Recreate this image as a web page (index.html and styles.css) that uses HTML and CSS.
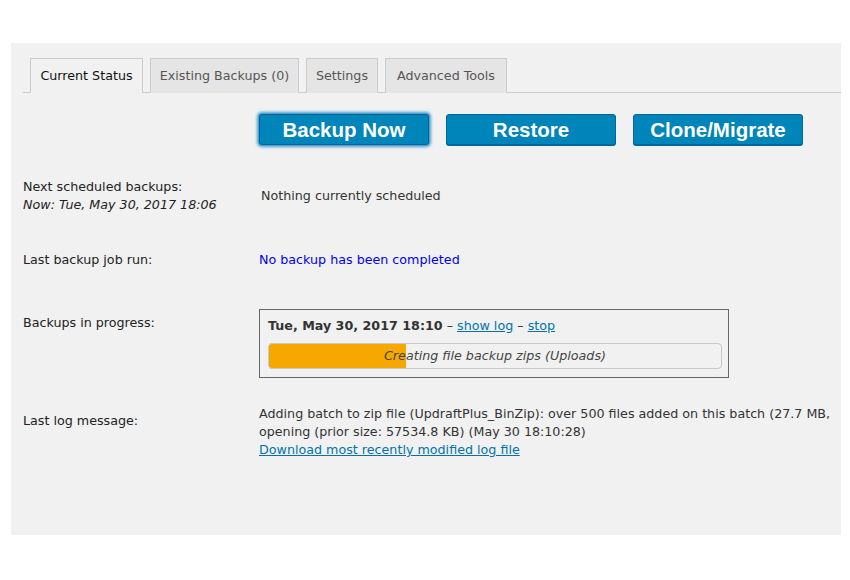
FILE: index.html
```html
<!DOCTYPE html>
<html>
<head>
<meta charset="utf-8">
<link rel="stylesheet" href="styles.css">
</head>
<body>
<div class="panel">
  <nav class="tabs">
    <span class="tab active">Current Status</span>
    <span class="tab">Existing Backups (0)</span>
    <span class="tab">Settings</span>
    <span class="tab">Advanced Tools</span>
  </nav>
  <div class="buttons">
    <button class="btn focused">Backup Now</button>
    <button class="btn">Restore</button>
    <button class="btn">Clone/Migrate</button>
  </div>
  <div class="row row-sched">
    <div class="label">Next scheduled backups:<br><em>Now: Tue, May 30, 2017 18:06</em></div>
    <div class="value muted">Nothing currently scheduled</div>
  </div>
  <div class="row row-last">
    <div class="label">Last backup job run:</div>
    <div class="value"><span class="blue">No backup has been completed</span></div>
  </div>
  <div class="row row-progress">
    <div class="label">Backups in progress:</div>
    <div class="value">
      <div class="job">
        <div class="job-title"><strong>Tue, May 30, 2017 18:10</strong> – <a href="#">show log</a> – <a href="#">stop</a></div>
        <div class="bar">
          <div class="fill" style="width:30.2%"></div>
          <div class="bar-text">Creating file backup zips (Uploads)</div>
        </div>
      </div>
    </div>
  </div>
  <div class="row row-log">
    <div class="label">Last log message:</div>
    <div class="value log">Adding batch to zip file (UpdraftPlus_BinZip): over 500 files added on this batch (27.7 MB,<br>opening (prior size: 57534.8 KB) (May 30 18:10:28)<br><a href="#">Download most recently modified log file</a></div>
  </div>
</div>
</body>
</html>
```

FILE: styles.css
```css
html, body {
  margin: 0;
  padding: 0;
  background: #ffffff;
}
body {
  font-family: "DejaVu Sans", Verdana, sans-serif;
  font-size: 12.7px;
  line-height: 18px;
  color: #222;
}
.panel {
  margin: 43px 0 0 11px;
  width: 830px;
  height: 492px;
  background: #f1f1f1;
  box-sizing: border-box;
  padding: 15px 0 0 12px;
  overflow: hidden;
}
.tabs {
  display: flex;
  gap: 7px;
  padding-left: 7px;
  border-bottom: 1px solid #cccccc;
  height: 34px;
}
.tab {
  box-sizing: border-box;
  height: 35px;
  padding: 0 0 1px;
  border: 1px solid #cccccc;
  border-bottom: none;
  background: #e5e5e5;
  color: #555;
  display: flex;
  align-items: center;
  justify-content: center;
}
.tab:nth-child(1) { width: 113px; }
.tab:nth-child(2) { width: 149px; }
.tab:nth-child(3) { width: 72px; }
.tab:nth-child(4) { width: 122px; }
.tab.active {
  background: #f1f1f1;
  color: #111;
  position: relative;
  z-index: 1;
}
.buttons {
  display: flex;
  gap: 17px;
  margin: 21px 0 0 236px;
}
.btn {
  width: 170px;
  height: 31px;
  box-sizing: border-box;
  background: #0085ba;
  border: 1px solid #006799;
  border-radius: 3px;
  color: #fff;
  font-family: "Liberation Sans", Arial, sans-serif;
  font-weight: bold;
  font-size: 20.5px;
  line-height: 29px;
  padding: 0;
  box-shadow: 0 1px 0 #006799;
}
.btn.focused {
  box-shadow: 0 0 0 1px #5b9dd9, 0 0 3px 2px rgba(30, 140, 190, 0.8);
}
.row {
  display: flex;
  align-items: center;
}
.label {
  width: 236px;
  flex: none;
}
.label em {
  font-style: italic;
}
.row-sched { margin-top: 33px; }
.row-sched .value { padding-left: 2px; }
.row-last { margin-top: 37px; }
.row-progress {
  margin-top: 40px;
  align-items: flex-start;
}
.row-progress .label { padding-top: 5px; }
.row-log {
  margin-top: 27px;
  align-items: flex-start;
}
.row-log .label { padding-top: 7px; }
.muted { color: #333; }
.blue { color: #0000ee; }
a {
  color: #0073aa;
  text-decoration: underline;
}
.job {
  width: 470px;
  box-sizing: border-box;
  border: 1px solid #666;
  padding: 7px 6px 8px 8px;
  color: #333;
}
.job-title strong { color: #333; }
.bar {
  position: relative;
  margin-top: 8px;
  height: 26px;
  box-sizing: border-box;
  border: 1px solid #c8c8c8;
  border-radius: 4px;
  background: #f1f1f1;
  overflow: hidden;
}
.fill {
  position: absolute;
  left: 0;
  top: 0;
  bottom: 0;
  background: #f6a800;
}
.bar-text {
  position: relative;
  text-align: center;
  font-style: italic;
  color: #444;
  line-height: 24px;
}
.log {
  white-space: nowrap;
  color: #333;
}
```
